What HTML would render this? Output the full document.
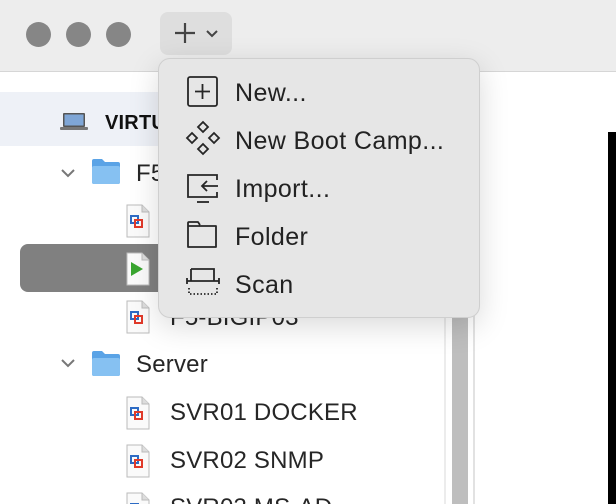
<!DOCTYPE html>
<html style="width:616px;height:504px;overflow:hidden"><head><style>
*{margin:0;padding:0;box-sizing:border-box}
body{width:616px;height:504px;overflow:hidden;background:#fff;font-family:"Liberation Sans",sans-serif;position:relative;color:#222}
.abs{position:absolute}
.tl{position:absolute;top:22px;width:25px;height:25px;border-radius:50%;background:#868686}
.t{position:absolute;font-size:24px;color:#262626;white-space:nowrap;line-height:1;letter-spacing:0.2px}
.m{position:absolute;left:235px;font-size:25px;color:#222;line-height:1;white-space:nowrap;letter-spacing:0.4px}
</style></head><body>
<div class="abs" style="left:0;top:0;width:616px;height:72px;background:#ededed;border-bottom:1px solid #d6d6d6"></div>
<div class="tl" style="left:26px"></div><div class="tl" style="left:66px"></div><div class="tl" style="left:106px"></div>
<div class="abs" style="left:160px;top:12px;width:72px;height:43px;background:#dedede;border-radius:8px"></div>
<svg class="abs" style="left:170px;top:20px" width="60" height="28"><path d="M15 3v20M5 13h20" stroke="#444" stroke-width="2.2"/><path d="M37 11l5 5 5-5" stroke="#444" stroke-width="2" fill="none"/></svg>
<div class="abs" style="left:0;top:92px;width:470px;height:54px;background:#eef1f7"></div>
<svg class="abs" style="left:60px;top:112px" width="30" height="20"><rect x="3" y="1" width="22" height="14" rx="1" fill="#555"/><rect x="4.5" y="2.5" width="19" height="11" fill="#7fa6d6"/><rect x="0" y="15" width="28" height="3" rx="1" fill="#777"/></svg>
<div class="t" style="left:105px;top:113px;font-weight:bold;font-size:20px;color:#111">VIRTUAL</div>
<svg class="abs" style="left:60px;top:168px" width="16" height="12"><path d="M2 2l6 6 6-6" stroke="#777" stroke-width="2" fill="none"/></svg>
<svg class="abs" style="left:91px;top:158px" width="30" height="28"><path d="M1 3q0-2 2-2h8l3 3h13q2 0 2 2v18q0 2-2 2H3q-2 0-2-2z" fill="#5aa3e6"/><rect x="1" y="8" width="28" height="18" rx="2" fill="#86c1f2"/></svg>
<div class="t" style="left:136px;top:162px">F5</div>
<div class="abs" style="left:20px;top:244px;width:450px;height:48px;background:#808080;border-radius:8px"></div>
<svg width="0" height="0" style="position:absolute"><defs><g id="doc"><path d="M1 1h15l7 7v25H1z" fill="#fafafa" stroke="#bbb"/><path d="M16 1v7h7" fill="#ddd" stroke="#bbb"/></g></defs></svg>
<svg class="abs" style="left:126px;top:204px" width="25" height="35"><use href="#doc"/><rect x="5" y="12" width="7" height="7" fill="none" stroke="#2d6bc4" stroke-width="2"/><rect x="9" y="16" width="7" height="7" fill="none" stroke="#e03a2a" stroke-width="2"/></svg>
<svg class="abs" style="left:126px;top:252px" width="25" height="35"><use href="#doc"/><path d="M5 10l12 7-12 7z" fill="#3aa630"/></svg>
<svg class="abs" style="left:126px;top:300px" width="25" height="35"><use href="#doc"/><rect x="5" y="12" width="7" height="7" fill="none" stroke="#2d6bc4" stroke-width="2"/><rect x="9" y="16" width="7" height="7" fill="none" stroke="#e03a2a" stroke-width="2"/></svg>
<div class="t" style="left:170px;top:306px">F5-BIGIP03</div>
<svg class="abs" style="left:60px;top:358px" width="16" height="12"><path d="M2 2l6 6 6-6" stroke="#777" stroke-width="2" fill="none"/></svg>
<svg class="abs" style="left:91px;top:350px" width="30" height="28"><path d="M1 3q0-2 2-2h8l3 3h13q2 0 2 2v18q0 2-2 2H3q-2 0-2-2z" fill="#5aa3e6"/><rect x="1" y="8" width="28" height="18" rx="2" fill="#86c1f2"/></svg>
<div class="t" style="left:136px;top:353px">Server</div>
<svg class="abs" style="left:126px;top:396px" width="25" height="35"><use href="#doc"/><rect x="5" y="12" width="7" height="7" fill="none" stroke="#2d6bc4" stroke-width="2"/><rect x="9" y="16" width="7" height="7" fill="none" stroke="#e03a2a" stroke-width="2"/></svg>
<div class="t" style="left:170px;top:401px">SVR01 DOCKER</div>
<svg class="abs" style="left:126px;top:444px" width="25" height="35"><use href="#doc"/><rect x="5" y="12" width="7" height="7" fill="none" stroke="#2d6bc4" stroke-width="2"/><rect x="9" y="16" width="7" height="7" fill="none" stroke="#e03a2a" stroke-width="2"/></svg>
<div class="t" style="left:170px;top:449px">SVR02 SNMP</div>
<div class="abs" style="left:0;top:490px;width:440px;height:14px;overflow:hidden">
<svg class="abs" style="left:126px;top:2px" width="25" height="35"><use href="#doc"/><rect x="5" y="12" width="7" height="7" fill="none" stroke="#2d6bc4" stroke-width="2"/></svg>
<div class="t" style="left:170px;top:6px">SVR03 MS-AD</div></div>
<div class="abs" style="left:444px;top:73px;width:2px;height:431px;background:#ececec"></div>
<div class="abs" style="left:452px;top:73px;width:16px;height:431px;background:#bebebe"></div>
<div class="abs" style="left:473px;top:73px;width:2px;height:431px;background:#e2e2e2"></div>
<div class="abs" style="left:608px;top:132px;width:8px;height:372px;background:#000"></div>
<div class="abs" style="left:158px;top:58px;width:322px;height:260px;background:#e6e6e6;border:1px solid #cfcfcf;border-radius:12px;box-shadow:0 8px 30px rgba(0,0,0,.15)"></div>
<svg class="abs" style="left:184px;top:74px" width="40" height="232" fill="none" stroke="#262626" stroke-width="1.8">
<rect x="4" y="3" width="29" height="29" rx="2"/><path d="M18.5 10v15M11 17.5h15"/>
<g transform="translate(0,48)"><path d="M19 0l5 5-5 5-5-5zM8 11l5 5-5 5-5-5zM30 11l5 5-5 5-5-5zM19 22l5 5-5 5-5-5z"/></g>
<g transform="translate(0,96)"><path d="M33 10V5H4v22h29v-5"/><path d="M13 32h12"/><path d="M34 16H18M23 11l-5 5 5 5"/></g>
<g transform="translate(0,144)"><path d="M4 8V5q0-1 1-1h9l2 3M4 8h28v21H4z" stroke-linejoin="round"/></g>
<g transform="translate(0,192)"><path d="M7 3h23v12M7 3v12M3 15h32M3 12v6M35 12v6"/><path d="M5 22v6h28v-6" stroke-dasharray="1.5 2"/></g>
</svg>
<div class="m" style="top:81px">New...</div>
<div class="m" style="top:129px">New Boot Camp...</div>
<div class="m" style="top:177px">Import...</div>
<div class="m" style="top:225px">Folder</div>
<div class="m" style="top:273px">Scan</div>
</body></html>
